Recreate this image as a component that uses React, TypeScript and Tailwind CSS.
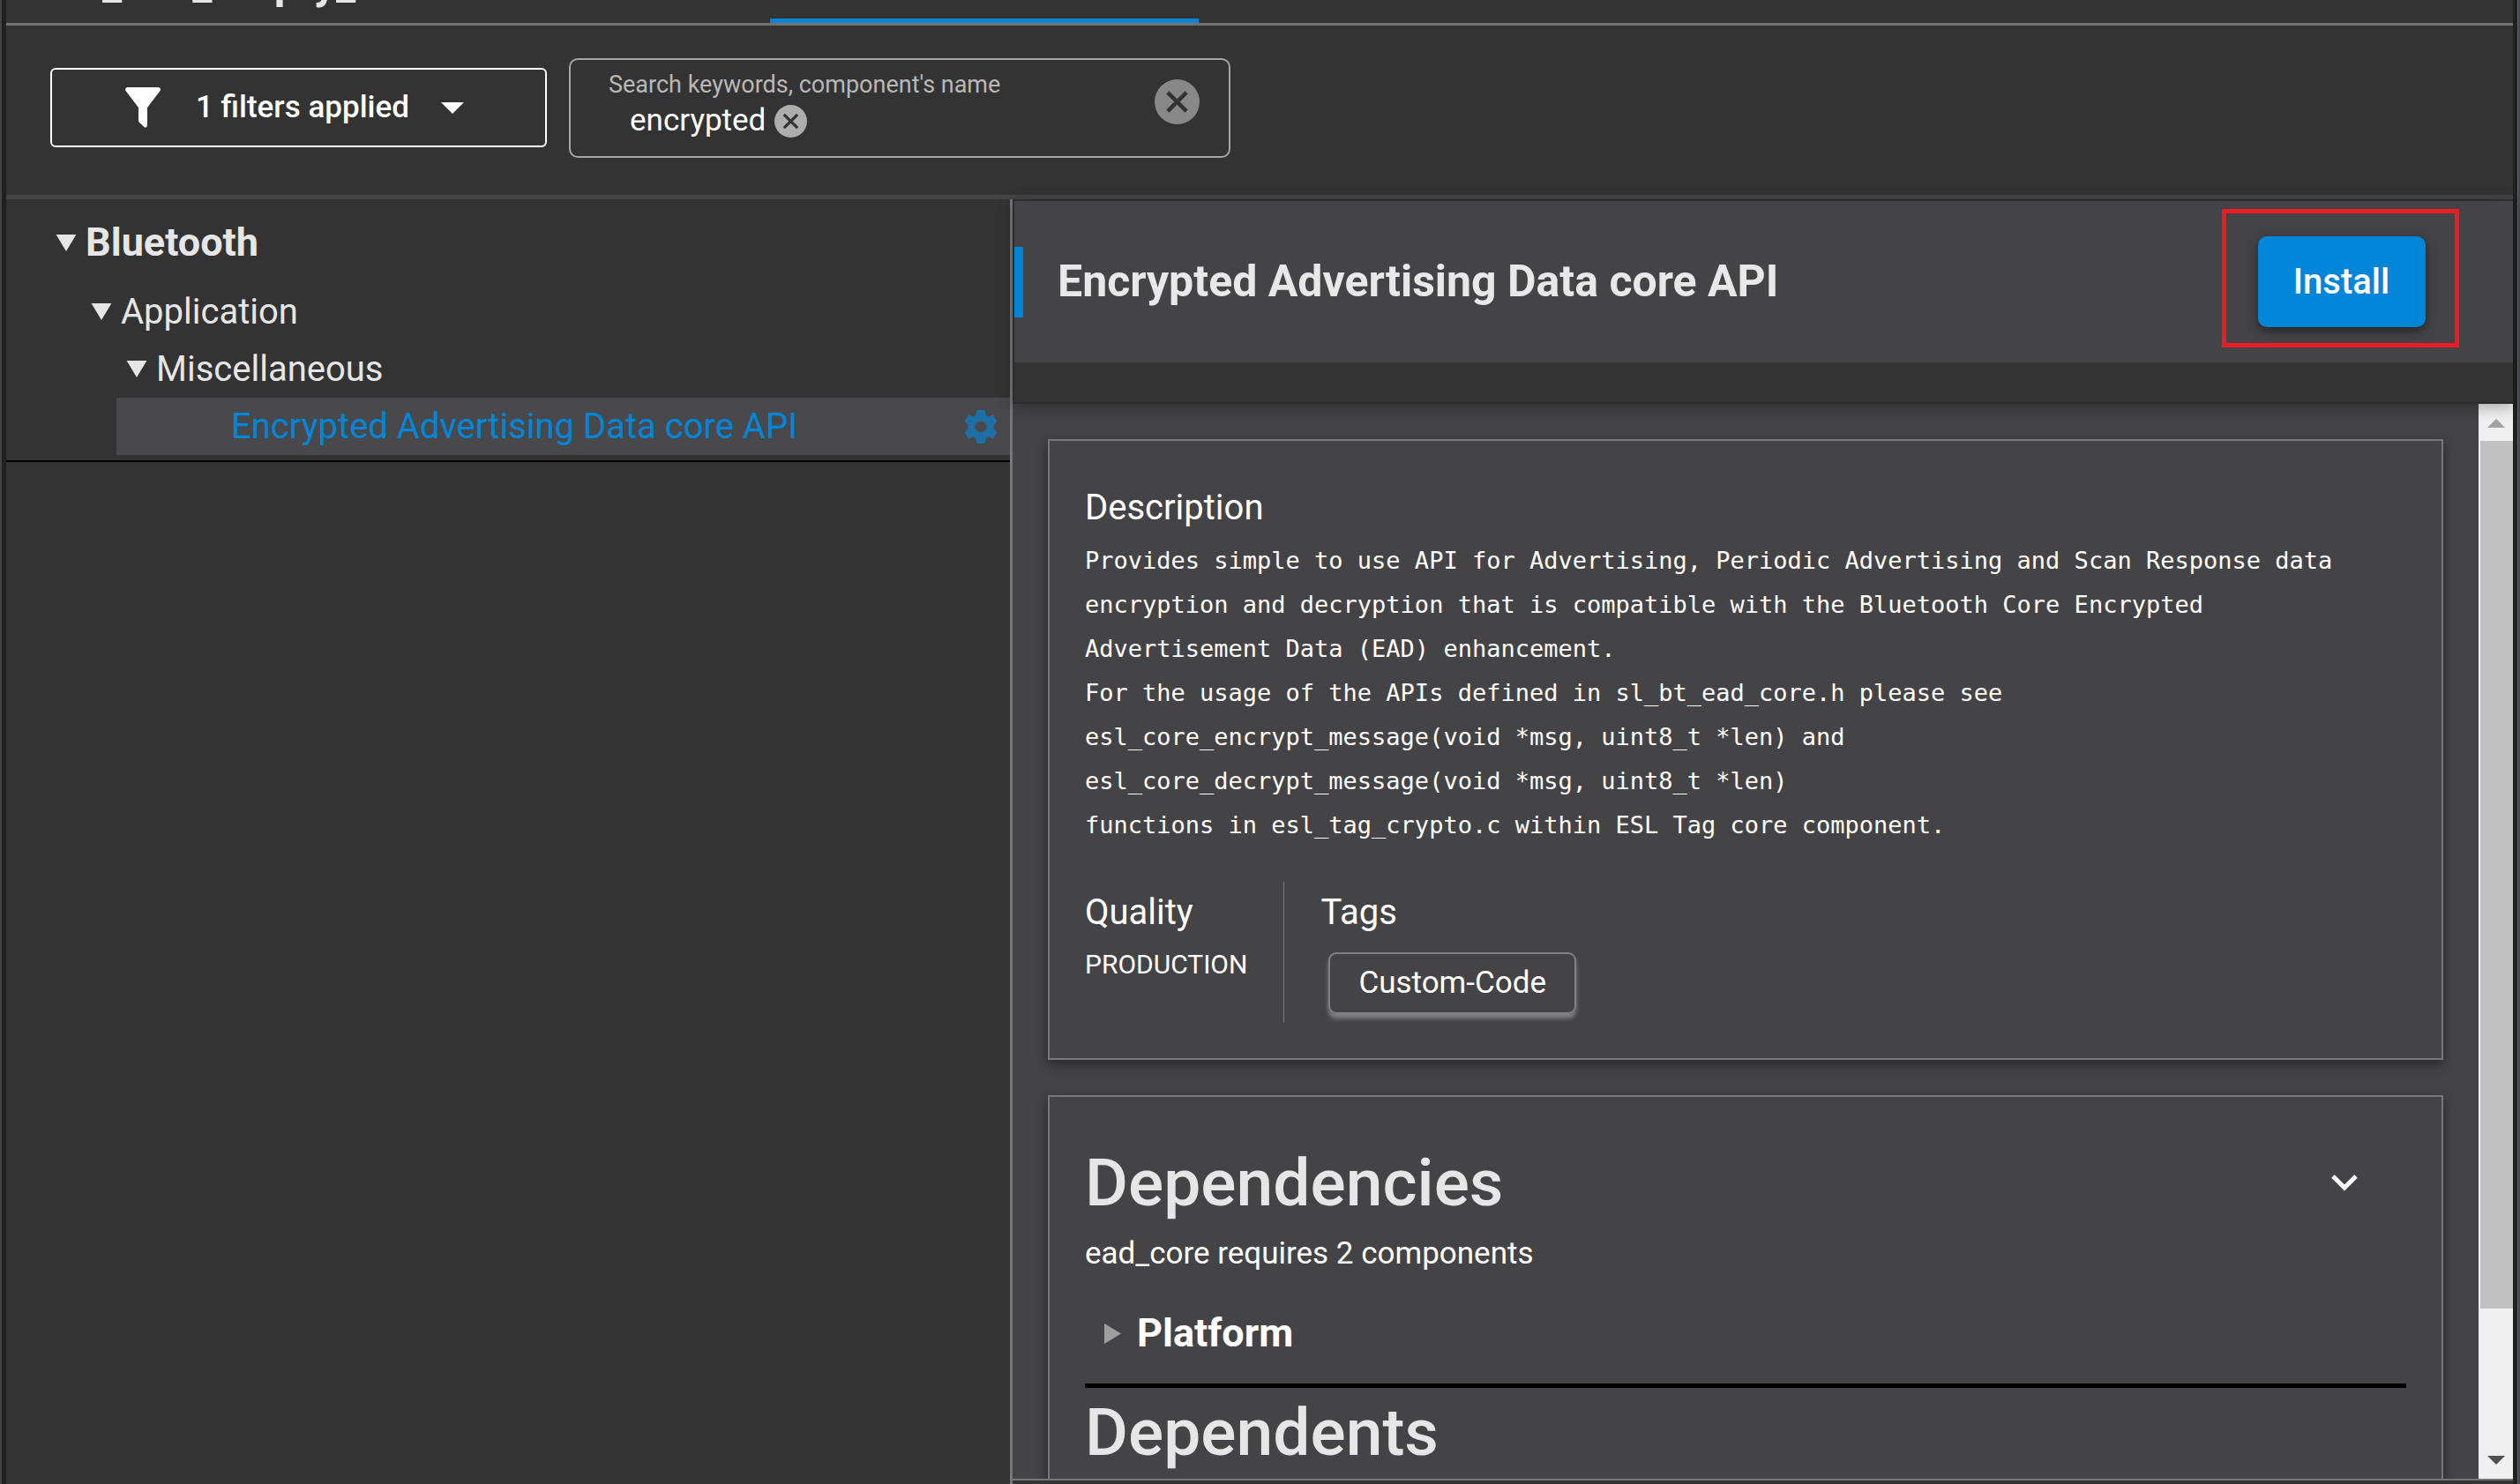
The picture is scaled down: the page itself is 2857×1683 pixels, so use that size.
import React from "react";

function Down({ className }: { className: string }) {
  return (
    <svg viewBox="0 0 24 20" className={className} aria-hidden="true">
      <path d="M0 0H24L12 20Z" fill="currentColor" />
    </svg>
  );
}

function CircleX({ className }: { className: string }) {
  return (
    <svg viewBox="0 0 24 24" className={className} aria-hidden="true">
      <circle cx="12" cy="12" r="12" fill="currentColor" />
      <path d="M7 7L17 17M17 7L7 17" stroke="#333333" strokeWidth="2.1" />
    </svg>
  );
}

function Gear() {
  return (
    <svg viewBox="0 0 36 38" className="h-[38px] w-9" aria-hidden="true">
      <path
        fill="currentColor"
        fillRule="evenodd"
        d="M13.500 0H22.500L23.500 5.500L27 7.500L32 5.500L36.500 13L32.500 16.500V21.500L36.500 25L32 32.500L27 30.500L23.500 32.500L22.500 38H13.500L12.500 32.500L9 30.500L4 32.500L-.5 25L3.500 21.500V16.500L-.5 13L4 5.500L9 7.500L12.500 5.500ZM18 12.500A6.500 6.500 0 1 0 18 25.500A6.500 6.500 0 1 0 18 12.500Z"
      />
    </svg>
  );
}

const description = `Provides simple to use API for Advertising, Periodic Advertising and Scan Response data
encryption and decryption that is compatible with the Bluetooth Core Encrypted
Advertisement Data (EAD) enhancement.
For the usage of the APIs defined in sl_bt_ead_core.h please see
esl_core_encrypt_message(void *msg, uint8_t *len) and
esl_core_decrypt_message(void *msg, uint8_t *len)
functions in esl_tag_crypto.c within ESL Tag core component.`;

const card =
  "border-2 border-[#77787a] bg-[#444446] px-10 shadow-[0_4px_12px_rgba(0,0,0,0.45)]";

function Header() {
  return (
    <header className="flex h-[29px] shrink-0 items-end overflow-hidden border-b-[3px] border-[#737373]">
      <h1 className="w-[866px] shrink-0 pb-4 pl-16 text-[50px] leading-[58px] font-bold text-[#e6e6e6]">
        bt_soc_empty_2
      </h1>
      <div className="h-[5px] w-[486px] bg-[#0086d9]" />
    </header>
  );
}

function Toolbar() {
  return (
    <section className="flex h-[197px] shrink-0 items-start gap-[25px] border-b-[5px] border-[#444446] pl-[50px]">
      <button className="mt-12 flex h-[90px] w-[563px] items-center rounded-md border-2 border-white pl-[83px] text-[35px] font-medium text-white">
        <svg viewBox="0 0 40 46" className="h-[46px] w-10" aria-hidden="true">
          <path
            fill="currentColor"
            d="M2 0H38Q41 1 39.500 4L25 23V43Q24 47 21.500 45L16 40Q15 39 15 37V23L.5 4Q-1 1 2 0Z"
          />
        </svg>
        <span className="ml-10">1 filters applied</span>
        <svg viewBox="0 0 26 13" className="ml-9 h-[13px] w-[26px]" aria-hidden="true">
          <path d="M0 0H26L13 13Z" fill="currentColor" />
        </svg>
      </button>
      <div className="mt-[37px] flex h-[113px] w-[750px] items-start rounded-[10px] border-2 border-[#a6a6a6] pr-[33px] pl-[43px]">
        <div className="grow">
          <label htmlFor="search" className="mt-3 block text-[27px] leading-8 text-[#b8b8b8]">
            Search keywords, component's name
          </label>
          <div className="flex items-center pl-6">
            <span className="text-[35px] leading-[50px] text-white">encrypted</span>
            <button aria-label="Remove encrypted" className="ml-[10px] text-[#adadad]">
              <CircleX className="h-[37px] w-[37px]" />
            </button>
            <input
              id="search"
              className="w-40 min-w-0 grow bg-transparent text-[35px] leading-[50px] text-white outline-none"
            />
          </div>
        </div>
        <button aria-label="Clear search" className="mt-[22px] text-[#888888]">
          <CircleX className="h-[51px] w-[51px]" />
        </button>
      </div>
    </section>
  );
}

function Tree() {
  return (
    <nav className="w-[1138px] shrink-0 text-[40px] text-[#e6e6e6]">
      <div className="border-b-2 border-black pb-[6px]">
        <button className="mt-[9px] flex h-[80px] w-full items-center pl-[56px] text-[45px] font-bold">
          <Down className="mr-[10px] h-[19px] w-6" />
          Bluetooth
        </button>
        <button className="mt-[6px] flex h-[65px] w-full items-center pl-[96px]">
          <Down className="mr-[10px] h-[19px] w-6" />
          Application
        </button>
        <button className="flex h-[65px] w-full items-center pl-[136px]">
          <Down className="mr-[10px] h-[19px] w-6" />
          Miscellaneous
        </button>
        <div className="ml-[125px] flex h-[65px] items-center justify-between bg-[#49494b] pr-[15px] pl-[130px]">
          <a href="#ead" className="text-[#0086d9]">
            Encrypted Advertising Data core API
          </a>
          <button aria-label="Configure" className="text-[#1e6fa5]">
            <Gear />
          </button>
        </div>
      </div>
    </nav>
  );
}

function DescriptionCard() {
  return (
    <section className={card}>
      <h3 className="mt-[51px] text-[40px] leading-[50px] text-white">Description</h3>
      <pre className="mt-[10px] font-['DejaVu_Sans_Mono',monospace] text-[27px] leading-[50px] text-white">
        {description}
      </pre>
      <div className="mt-[39px] mb-10 flex h-[160px]">
        <div className="border-r border-[#77787a] pr-[41px]">
          <h3 className="mt-[10px] text-[40px] leading-[50px] text-white">Quality</h3>
          <p className="mt-[13px] text-[30px] leading-[42px] text-white">PRODUCTION</p>
        </div>
        <div className="pl-[41px]">
          <h3 className="mt-[10px] text-[40px] leading-[50px] text-white">Tags</h3>
          <button className="mt-5 ml-[9px] flex h-[70px] items-center rounded-[9px] border-2 border-[#818183] px-8 text-[35px] text-white shadow-[0_5px_5px_#818183]">
            Custom-Code
          </button>
        </div>
      </div>
    </section>
  );
}

function DependencyCard() {
  return (
    <section className={`${card} pb-10`}>
      <div className="mt-[47px] flex items-center justify-between">
        <h2 className="text-[75px] leading-[100px] font-medium text-[#e6e6e6]">Dependencies</h2>
        <button aria-label="Collapse dependencies" className="mr-[55px] text-white">
          <svg viewBox="0 0 30 19" className="h-[19px] w-[30px]" aria-hidden="true">
            <path d="M2 2L15 15L28 2" fill="none" stroke="currentColor" strokeWidth="5" />
          </svg>
        </button>
      </div>
      <p className="mt-[6px] text-[35px] leading-[50px] text-white">ead_core requires 2 components</p>
      <button className="mt-[30px] flex h-[70px] items-center pl-[22px] text-[45px] font-bold text-white">
        <svg viewBox="0 0 19 23" className="mr-[18px] h-[23px] w-[19px] text-[#9e9e9e]" aria-hidden="true">
          <path d="M0 0L19 11.500L0 23Z" fill="currentColor" />
        </svg>
        Platform
      </button>
      <hr className="mt-[22px] border-t-[5px] border-black" />
      <h2 className="text-[75px] leading-[100px] font-medium text-[#e6e6e6]">Dependents</h2>
    </section>
  );
}

function Scrollbar() {
  return (
    <div className="flex w-[39px] shrink-0 flex-col items-center bg-[#f0f0f0]">
      <button aria-label="Scroll up" className="flex h-[42px] items-center pt-[2px]">
        <svg viewBox="0 0 20 10" className="h-[10px] w-5" aria-hidden="true">
          <path d="M0 10L10 0L20 10Z" fill="#a3a3a3" />
        </svg>
      </button>
      <div className="flex w-full grow flex-col pl-[2px]">
        <div className="grow-[13] bg-[#c1c1c1]" />
        <div className="grow-[2]" />
      </div>
      <button aria-label="Scroll down" className="flex h-[42px] items-center">
        <svg viewBox="0 0 20 10" className="h-[10px] w-5" aria-hidden="true">
          <path d="M0 0L10 10L20 0Z" fill="#505050" />
        </svg>
      </button>
    </div>
  );
}

function Details() {
  return (
    <main className="flex min-w-0 grow flex-col border-l-[3px] border-[#77787a]">
      <div className="z-10 shrink-0 border-y-2 border-l-2 border-[#2c2c2d] bg-[#333333] pb-[45px] shadow-[0_4px_16px_rgba(0,0,0,0.3)]">
        <div className="flex h-[183px] items-center justify-between bg-[#444446] pr-[61px]">
          <div className="flex h-20 items-center border-l-[10px] border-[#0086d9] pl-[39px]">
            <h2 className="text-[50px] font-bold text-[#e8e8e8]">Encrypted Advertising Data core API</h2>
          </div>
          <div className="mb-[8px] flex h-[157px] w-[269px] items-center justify-center border-[5px] border-[#ed1c24] pt-2 pl-[2px]">
            <button className="h-[103px] w-[190px] rounded-[10px] bg-[#0086d9] text-[40px] font-medium text-white shadow-[0_4px_12px_rgba(0,0,0,0.5)]">
              Install
            </button>
          </div>
        </div>
      </div>
      <div className="flex min-h-0 grow bg-[#444446]">
        <div className="flex min-w-0 grow flex-col gap-10 overflow-hidden pt-10 pr-10 pl-10">
          <DescriptionCard />
          <DependencyCard />
        </div>
        <Scrollbar />
      </div>
      <div className="h-[6px] shrink-0 border-t-2 border-[#77787a] bg-[#333333]" />
    </main>
  );
}

export default function App() {
  return (
    <div className="flex h-screen overflow-hidden border-l-2 border-[#444444] bg-[#202020] pl-[5px] font-[Roboto,sans-serif]">
      <div className="flex min-w-0 grow flex-col bg-[#333333]">
        <Header />
        <Toolbar />
        <div className="flex min-h-0 grow">
          <Tree />
          <Details />
        </div>
      </div>
      <div className="w-[5px] shrink-0 bg-[#202020]" />
      <div className="w-[3px] shrink-0 border-l border-[#666666] bg-[#404a4e]" />
    </div>
  );
}
